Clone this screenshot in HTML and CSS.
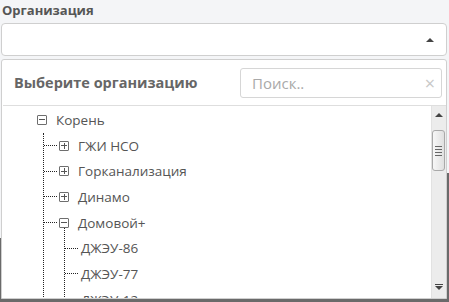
FILE: index.html
```html
<!DOCTYPE html>
<html>
<head>
  <title>Организация</title>
  <link rel="stylesheet" href="styles.css">
</head>
<body>
  <div class="backdrop"></div>
  <div class="field">
    <div class="field-label">Организация</div>
    <div class="select">
      <span class="caret-up"></span>
    </div>
  </div>

  <div class="dropdown">
    <div class="dropdown-head">
      <div class="dropdown-title">Выберите организацию</div>
      <div class="search">
        <span class="search-ph">Поиск..</span>
        <span class="search-clear">&times;</span>
      </div>
    </div>
    <div class="dropdown-body">
      <div class="tree">
        <div class="row"><span class="tog minus"></span><span class="name">Корень</span></div>
        <div class="children">
          <div class="row"><span class="link"></span><span class="tog plus"></span><span class="name">ГЖИ НСО</span></div>
          <div class="row"><span class="link"></span><span class="tog plus"></span><span class="name">Горканализация</span></div>
          <div class="row"><span class="link"></span><span class="tog plus"></span><span class="name">Динамо</span></div>
          <div class="row"><span class="link"></span><span class="tog minus"></span><span class="name">Домовой+</span></div>
          <div class="children sub">
            <div class="row"><span class="link"></span><span class="name leaf">ДЖЭУ-86</span></div>
            <div class="row"><span class="link"></span><span class="name leaf">ДЖЭУ-77</span></div>
            <div class="row"><span class="link"></span><span class="name leaf">ДЖЭУ-12</span></div>
          </div>
        </div>
      </div>
      <div class="scrollbar">
        <span class="sb-up"></span>
        <div class="sb-thumb"><i></i><i></i><i></i><i></i></div>
        <span class="sb-down"></span>
      </div>
    </div>
  </div>
</body>
</html>
```

FILE: styles.css
```css
body {
  margin: 0;
  background-color: #f4f5f7;
  font-family: 'Open Sans', 'Liberation Sans', sans-serif;
  color: #555;
  height: 302px;
  overflow: hidden;
}
.backdrop {
  position: absolute;
  left: 0;
  right: 0;
  top: 238px;
  bottom: 0;
  background-color: #6a6a6a;
}
.backdrop::before {
  content: '';
  position: absolute;
  right: 0;
  top: -65px;
  width: 3px;
  height: 65px;
  background-color: #6a6a6a;
}
.field {
  padding: 1px 2px 0 1px;
}
.field-label {
  font-size: 13px;
  font-weight: 700;
  line-height: 18px;
  padding-left: 1px;
  color: #555;
}
.select {
  position: relative;
  margin-top: 4px;
  height: 31px;
  background-color: #fff;
  border: 1px solid #cfcfcf;
  border-radius: 4px;
}
.caret-up {
  position: absolute;
  right: 12px;
  top: 14px;
  width: 0;
  height: 0;
  border-left: 4px solid transparent;
  border-right: 4px solid transparent;
  border-bottom: 4px solid #444;
}
.dropdown {
  position: absolute;
  top: 59px;
  left: 1px;
  width: 444px;
  height: 238px;
  background-color: #fff;
  border: 1px solid #cfcfcf;
  border-radius: 3px 3px 0 0;
  display: flex;
  flex-direction: column;
  overflow: hidden;
}
.dropdown-head {
  display: flex;
  align-items: center;
  justify-content: space-between;
  height: 45px;
  padding: 0 4px 0 11px;
  border-bottom: 1px solid #dedede;
  margin-left: 1px;
}
.dropdown-title {
  font-size: 14.5px;
  font-weight: 700;
  color: #666;
  margin-top: -1px;
}
.search {
  display: flex;
  align-items: center;
  justify-content: space-between;
  width: 183px;
  height: 28px;
  padding: 0 6px 0 11px;
  border: 1px solid #d6d6d6;
  border-radius: 3px;
  margin-top: 1px;
}
.search-ph {
  font-size: 15px;
  color: #a9a9a9;
}
.search-clear {
  font-size: 18px;
  color: #c8c8c8;
  line-height: 1;
}
.dropdown-body {
  flex: 1;
  display: flex;
  min-height: 0;
}
.tree {
  flex: 1;
  padding: 1px 0 0 35px;
  font-size: 13.5px;
  overflow: hidden;
}
.row {
  display: flex;
  align-items: center;
  height: 25.7px;
}
.name {
  margin-left: 9px;
  color: #555;
}
.name.leaf {
  margin-left: 1px;
}
.tog {
  position: relative;
  width: 8px;
  height: 8px;
  border: 1px solid #6e6e6e;
  border-radius: 1px;
  flex: none;
}
.tog::before {
  content: '';
  position: absolute;
  left: 1px;
  right: 1px;
  top: 3.5px;
  height: 1px;
  background-color: #555;
}
.tog.plus::after {
  content: '';
  position: absolute;
  top: 1px;
  bottom: 1px;
  left: 3.5px;
  width: 1px;
  background-color: #555;
}
.children {
  margin-left: 6px;
  border-left: 1px dotted #222;
  height: 400px;
}
.children.sub {
  margin-left: 20px;
  margin-top: -8px;
  padding-top: 8px;
}
.link {
  width: 13px;
  border-top: 1px dotted #222;
  margin-right: 2px;
  flex: none;
}
.scrollbar {
  position: relative;
  width: 14px;
  background-color: #ececec;
  border-left: 1px solid #e2e2e2;
  flex: none;
}
.sb-up,
.sb-down {
  position: absolute;
  left: 3px;
  width: 0;
  height: 0;
  border-left: 4px solid transparent;
  border-right: 4px solid transparent;
}
.sb-up {
  top: 7px;
  border-bottom: 4px solid #444;
}
.sb-down {
  bottom: 8px;
  border-top: 4px solid #444;
}
.sb-down::before {
  content: '';
  position: absolute;
  left: -4px;
  top: -6px;
  width: 8px;
  height: 1px;
  background-color: #444;
}
.sb-thumb {
  position: absolute;
  top: 24px;
  left: 0;
  width: 11px;
  height: 39px;
  border: 1px solid #a9a9a9;
  border-radius: 3px;
  background: linear-gradient(to right, #f7f7f7, #e0e0e0);
  display: flex;
  flex-direction: column;
  justify-content: center;
  align-items: center;
  gap: 2px;
}
.sb-thumb i {
  display: block;
  width: 7px;
  height: 1px;
  background-color: #666;
}
```
